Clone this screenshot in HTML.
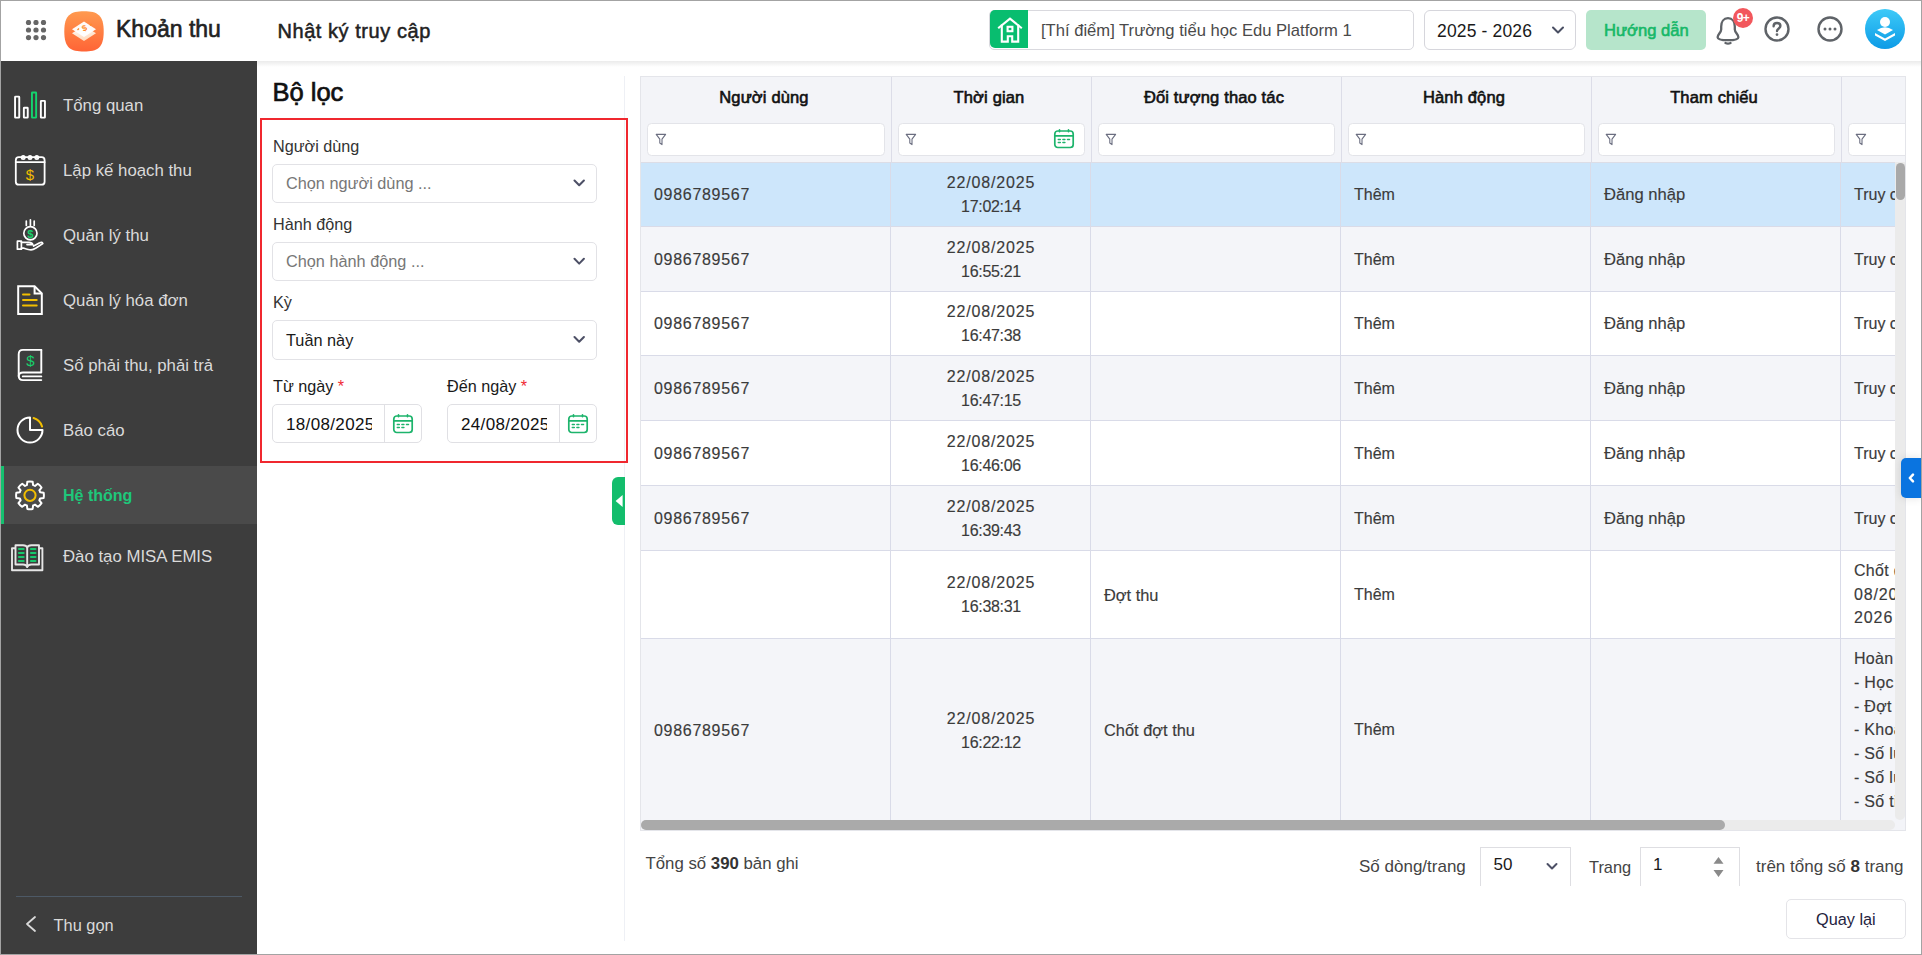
<!DOCTYPE html>
<html><head><meta charset="utf-8">
<style>
*{box-sizing:border-box;margin:0;padding:0}
html,body{width:1922px;height:955px;overflow:hidden;background:#fff}
body{font-family:"Liberation Sans",sans-serif;position:relative;color:#333}
.a{position:absolute}
#frame{position:absolute;left:0;top:0;width:1922px;height:955px;border:1px solid #a3a3a3;z-index:50;pointer-events:none}
/* header */
#hdr{left:1px;top:1px;width:1920px;height:60px;background:#fff}
#hdrsh{left:257px;top:61px;width:1664px;height:6px;background:linear-gradient(#ebebeb,rgba(255,255,255,0))}
/* sidebar */
#side{left:1px;top:61px;width:256px;height:893px;background:#3d3d3d}
.mi{position:absolute;left:0;width:256px;height:58px}
.mi .t{position:absolute;left:62px;top:0;line-height:58px;font-size:16px;color:#dcdcdc;white-space:nowrap}
.mi svg{position:absolute;left:11px;top:11px}
.mi.act{background:#4a4a4a}
.mi.act:before{content:"";position:absolute;left:0;top:0;width:3px;height:58px;background:#1bc37a}
.mi.act .t{color:#1fc77c;font-weight:700}
/* filter */
.lbl{position:absolute;font-size:16px;color:#333;white-space:nowrap}
.sel{position:absolute;border:1px solid #dcdde3;border-radius:5px;background:#fff}
.sel .tx{position:absolute;left:13px;top:0;font-size:16px;white-space:nowrap}
.chev{position:absolute}
/* table */
.th{position:absolute;font-weight:700;font-size:16px;color:#111;white-space:nowrap;text-align:center}
.cell{position:absolute;font-size:16px;color:#3b3b3b;white-space:nowrap;-webkit-text-stroke:0.15px #3b3b3b}
</style></head><body>
<div id="frame"></div>
<div id="hdr" class="a"></div>
<div id="hdrsh" class="a"></div>
<div id="side" class="a"></div>

<!-- sidebar -->
<div class="a" style="left:1px;top:466px;width:256px;height:58px;background:#4a4a4a"></div>
<div class="a" style="left:1px;top:466px;width:3px;height:58px;background:#15c06f"></div>
<div class="a" style="left:63px;top:1px;width:190px;height:955px;font-size:16.8px;line-height:20px;color:#dadada;white-space:nowrap">
 <div class="a" style="top:95px">Tổng quan</div>
 <div class="a" style="top:160px">Lập kế hoạch thu</div>
 <div class="a" style="top:225px">Quản lý thu</div>
 <div class="a" style="top:290px">Quản lý hóa đơn</div>
 <div class="a" style="top:355px">Sổ phải thu, phải trả</div>
 <div class="a" style="top:420px">Báo cáo</div>
 <div class="a" style="top:485px;font-size:16px;font-weight:700;color:#1ec77a">Hệ thống</div>
 <div class="a" style="top:546px">Đào tạo MISA EMIS</div>
 <div class="a" style="top:914px;left:-9.5px;font-size:16.4px">Thu gọn</div>
</div>
<div class="a" style="left:16px;top:896px;width:226px;height:1px;background:#4d5966"></div>
<svg class="a" style="left:0;top:0" width="257" height="955" viewBox="0 0 257 955" fill="none" stroke-linecap="round" stroke-linejoin="round">
 <!-- tong quan -->
 <g stroke="#fff" stroke-width="1.9">
  <rect x="15.05" y="96.65" width="4.2" height="21" rx="0.5"/>
  <rect x="23.85" y="107.75" width="3.9" height="9.9" rx="0.5"/>
  <rect x="40.85" y="100.85" width="4.1" height="16.8" rx="0.5"/>
 </g>
 <rect x="31.95" y="92.45" width="4.2" height="25.2" rx="0.5" stroke="#13d46e" stroke-width="1.9"/>
 <!-- calendar -->
 <g stroke="#fff" stroke-width="1.8">
  <path d="M18.8 157.2H41.6Q44.6 157.2 44.6 160.2V181.7Q44.6 184.7 41.6 184.7H18.8Q15.8 184.7 15.8 181.7V160.2Q15.8 157.2 18.8 157.2Z"/>
  <path d="M15.8 162.2H44.6"/>
  <circle cx="23.2" cy="157.6" r="1.6"/><circle cx="30" cy="157.6" r="1.6"/><circle cx="36.8" cy="157.6" r="1.6"/>
 </g>
 <text x="30" y="179.5" font-family="Liberation Sans" font-size="15" fill="#f2be00" stroke="none" text-anchor="middle">$</text>
 <!-- hand coin -->
 <g stroke="#fff" stroke-width="1.7">
  <circle cx="30.4" cy="233.3" r="6.6"/>
  <path d="M26.3 221V225.5M30.4 219.8V225.5M34.2 221V225.5"/>
  <rect x="17.4" y="241.2" width="4" height="8"/>
  <path d="M21.4 242.3H29Q32 242.3 32.8 244.6H27M21.4 248.2H24Q29 249.8 31 249.8Q33 249.8 36 248L42.8 243.6Q42 241.6 39.8 242.8L33.6 246"/>
 </g>
 <text x="30.4" y="238" font-family="Liberation Sans" font-weight="700" font-size="11" fill="#18d06c" stroke="none" text-anchor="middle">$</text>
 <!-- doc -->
 <g stroke="#fff" stroke-width="2" stroke-linecap="butt" stroke-linejoin="miter">
  <path d="M18.2 286.2H34.6L41.8 293.4V314H18.2Z"/>
  <path d="M34.6 286.2V293.4H41.8"/>
 </g>
 <g stroke="#f2be00" stroke-width="2">
  <path d="M23 294.5H29.5M23 300H36.7M23 305.5H36.7"/>
 </g>
 <!-- ledger book -->
 <g stroke="#fff" stroke-width="1.9">
  <path d="M41.3 349.9H23Q18.7 349.9 18.7 354.2V375.8Q18.7 380.1 23 380.1H41.3"/>
  <path d="M41.3 349.9V372.5H23Q18.7 372.5 18.7 376.2"/>
  <path d="M22.8 376.4H41.3"/>
 </g>
 <text x="30.3" y="366" font-family="Liberation Sans" font-size="15" fill="#18d06c" stroke="none" text-anchor="middle">$</text>
 <!-- pie -->
 <g stroke="#fff" stroke-width="2">
  <path d="M30 417.5V430H42.5A12.5 12.5 0 1 1 30 417.5Z"/>
 </g>
 <path d="M33.6 418A12.6 12.6 0 0 1 42.1 426.6" stroke="#f2be00" stroke-width="2"/>
 <!-- gear -->
 <path stroke="#fff" stroke-width="2" d="M26.90 485.16L27.35 481.66A13.9 13.9 0 0 1 32.65 481.66L33.10 485.16A10.6 10.6 0 0 1 34.98 485.94L37.77 483.78A13.9 13.9 0 0 1 41.52 487.53L39.36 490.32A10.6 10.6 0 0 1 40.14 492.20L43.64 492.65A13.9 13.9 0 0 1 43.64 497.95L40.14 498.40A10.6 10.6 0 0 1 39.36 500.28L41.52 503.07A13.9 13.9 0 0 1 37.77 506.82L34.98 504.66A10.6 10.6 0 0 1 33.10 505.44L32.65 508.94A13.9 13.9 0 0 1 27.35 508.94L26.90 505.44A10.6 10.6 0 0 1 25.02 504.66L22.23 506.82A13.9 13.9 0 0 1 18.48 503.07L20.64 500.28A10.6 10.6 0 0 1 19.86 498.40L16.36 497.95A13.9 13.9 0 0 1 16.36 492.65L19.86 492.20A10.6 10.6 0 0 1 20.64 490.32L18.48 487.53A13.9 13.9 0 0 1 22.23 483.78L25.02 485.94A10.6 10.6 0 0 1 26.90 485.16Z"/>
 <circle cx="30" cy="495.3" r="5.6" stroke="#f2be00" stroke-width="2"/>
 <!-- open book -->
 <g stroke="#e6e6e6" stroke-width="1.9">
  <path d="M15 548.2H12V570.2H42.4V548.2H39.5"/>
  <path d="M15.5 545.2H23Q26.5 545.2 27.2 547.5Q27.9 545.2 31.4 545.2H39V564.5H31.4Q28.2 564.5 27.2 567 26.2 564.5 23 564.5H15.5Z"/>
  <path d="M27.2 547.5V567"/>
 </g>
 <g stroke="#17c86c" stroke-width="2.2">
  <path d="M19 549H23.6M19 553H23.6M19 557H23.6M19 561H23.6M31 549H35.4M31 553H35.4M31 557H35.4M31 561H35.4"/>
 </g>
 <!-- thu gon chevron -->
 <path d="M35 917L27 924 35 931" stroke="#dadada" stroke-width="1.8"/>
</svg>


<!-- filter panel -->
<div class="a" style="left:624px;top:76px;width:1px;height:865px;background:#eef0f5"></div>
<div class="a" style="left:272.5px;top:76.5px;font-size:25.5px;line-height:30px;-webkit-text-stroke:0.7px #111;color:#111;white-space:nowrap">Bộ lọc</div>
<div class="a" style="left:260px;top:118px;width:368px;height:345px;border:2px solid #f0282f"></div>
<div class="a" style="left:273px;top:136px;font-size:16.2px;line-height:20px;color:#333;white-space:nowrap">Người dùng</div>
<div class="a" style="left:272px;top:164px;width:325px;height:39px;border:1px solid #e2e2e6;border-radius:5px"></div>
<div class="a" style="left:286px;top:172px;font-size:16.3px;line-height:22px;color:#777;white-space:nowrap">Chọn người dùng ...</div>
<div class="a" style="left:273px;top:214px;font-size:16.2px;line-height:20px;color:#333;white-space:nowrap">Hành động</div>
<div class="a" style="left:272px;top:242px;width:325px;height:39px;border:1px solid #e2e2e6;border-radius:5px"></div>
<div class="a" style="left:286px;top:250px;font-size:16.3px;line-height:22px;color:#777;white-space:nowrap">Chọn hành động ...</div>
<div class="a" style="left:273px;top:292px;font-size:16.2px;line-height:20px;color:#333;white-space:nowrap">Kỳ</div>
<div class="a" style="left:272px;top:320px;width:325px;height:40px;border:1px solid #e2e2e6;border-radius:5px"></div>
<div class="a" style="left:286px;top:329px;font-size:16.3px;line-height:22px;color:#1a1a1a;white-space:nowrap">Tuần này</div>
<svg class="a" style="left:0;top:0" width="640" height="470" viewBox="0 0 640 470" fill="none" stroke-linecap="round" stroke-linejoin="round">
 <path d="M574.5 180.5L579.2 185.3 583.9 180.5M574.5 258.8L579.2 263.6 583.9 258.8M574.5 337L579.2 341.8 583.9 337" stroke="#4d5066" stroke-width="2"/>
</svg>
<div class="a" style="left:273px;top:376px;font-size:16.2px;line-height:20px;color:#1a1a1a;white-space:nowrap">Từ ngày <span style="color:#f02a33">*</span></div>
<div class="a" style="left:447px;top:376px;font-size:16.2px;line-height:20px;color:#1a1a1a;white-space:nowrap">Đến ngày <span style="color:#f02a33">*</span></div>
<div class="a" style="left:272px;top:404px;width:150px;height:39px;border:1px solid #e0e0e4;border-radius:5px"></div>
<div class="a" style="left:384px;top:405px;width:1px;height:37px;background:#e0e0e4"></div>
<div class="a" style="left:447px;top:404px;width:150px;height:39px;border:1px solid #e0e0e4;border-radius:5px"></div>
<div class="a" style="left:559px;top:405px;width:1px;height:37px;background:#e0e0e4"></div>
<div class="a" style="left:286px;top:414px;width:85.5px;overflow:hidden;font-size:17px;line-height:22px;letter-spacing:0.35px;color:#111;white-space:nowrap">18/08/2025</div>
<div class="a" style="left:461px;top:414px;width:85.5px;overflow:hidden;font-size:17px;line-height:22px;letter-spacing:0.35px;color:#111;white-space:nowrap">24/08/2025</div>
<svg class="a" style="left:392px;top:414px" width="22" height="20" viewBox="0 0 22 20" fill="none" stroke="#1db46c" stroke-width="1.7" stroke-linecap="round">
 <rect x="1.8" y="2" width="18.4" height="16.5" rx="3"/><path d="M1.8 6.8H20.2M6.5 0.9V2.6M15.5 0.9V2.6"/>
 <path d="M5.3 10.4H7.3M9.9 10.4H11.9M14.5 10.4H16.5M5.3 13.6H7.3M9.9 13.6H11.9" stroke-width="1.5"/></svg>
<svg class="a" style="left:567px;top:414px" width="22" height="20" viewBox="0 0 22 20" fill="none" stroke="#1db46c" stroke-width="1.7" stroke-linecap="round">
 <rect x="1.8" y="2" width="18.4" height="16.5" rx="3"/><path d="M1.8 6.8H20.2M6.5 0.9V2.6M15.5 0.9V2.6"/>
 <path d="M5.3 10.4H7.3M9.9 10.4H11.9M14.5 10.4H16.5M5.3 13.6H7.3M9.9 13.6H11.9" stroke-width="1.5"/></svg>
<div class="a" style="left:612px;top:477px;width:13px;height:48px;background:#13bd6c;border-radius:6px 0 0 6px"></div>
<svg class="a" style="left:612px;top:477px" width="13" height="48" viewBox="0 0 13 48"><path d="M3.6 24L10.6 18V30Z" fill="#fff"/></svg>

<!-- TABLE START -->
<!-- table -->
<div class="a" style="left:640px;top:76px;width:1266px;height:755px;border:1px solid #e4e5ea;background:#f3f4f8"></div>
<div class="a" style="left:641px;top:77px;width:1264px;height:85px;background:#f3f4f8"></div>
<div class="a" style="left:641px;top:162.0px;width:1254px;height:64.4px;background:#cde6fb"></div>
<div class="a" style="left:641px;top:226.4px;width:1254px;height:64.8px;background:#f4f5f9"></div>
<div class="a" style="left:641px;top:291.2px;width:1254px;height:64.4px;background:#ffffff"></div>
<div class="a" style="left:641px;top:355.6px;width:1254px;height:64.8px;background:#f4f5f9"></div>
<div class="a" style="left:641px;top:420.4px;width:1254px;height:64.7px;background:#ffffff"></div>
<div class="a" style="left:641px;top:485.1px;width:1254px;height:65.4px;background:#f4f5f9"></div>
<div class="a" style="left:641px;top:550.5px;width:1254px;height:87.8px;background:#ffffff"></div>
<div class="a" style="left:641px;top:638.3px;width:1254px;height:181.7px;background:#f4f5f9"></div>
<div class="a" style="left:641px;top:161.5px;width:1254px;height:1px;background:#dcdde6"></div>
<div class="a" style="left:641px;top:225.9px;width:1254px;height:1px;background:#d9dbe8"></div>
<div class="a" style="left:641px;top:290.7px;width:1254px;height:1px;background:#d9dbe8"></div>
<div class="a" style="left:641px;top:355.1px;width:1254px;height:1px;background:#d9dbe8"></div>
<div class="a" style="left:641px;top:419.9px;width:1254px;height:1px;background:#d9dbe8"></div>
<div class="a" style="left:641px;top:484.6px;width:1254px;height:1px;background:#d9dbe8"></div>
<div class="a" style="left:641px;top:550.0px;width:1254px;height:1px;background:#d9dbe8"></div>
<div class="a" style="left:641px;top:637.8px;width:1254px;height:1px;background:#d9dbe8"></div>
<div class="a" style="left:891px;top:77px;width:1px;height:85px;background:#dcdde8"></div>
<div class="a" style="left:890px;top:162px;width:1px;height:658px;background:#d9dbe8"></div>
<div class="a" style="left:1091px;top:77px;width:1px;height:85px;background:#dcdde8"></div>
<div class="a" style="left:1090px;top:162px;width:1px;height:658px;background:#d9dbe8"></div>
<div class="a" style="left:1341px;top:77px;width:1px;height:85px;background:#dcdde8"></div>
<div class="a" style="left:1340px;top:162px;width:1px;height:658px;background:#d9dbe8"></div>
<div class="a" style="left:1591px;top:77px;width:1px;height:85px;background:#dcdde8"></div>
<div class="a" style="left:1590px;top:162px;width:1px;height:658px;background:#d9dbe8"></div>
<div class="a" style="left:1841px;top:77px;width:1px;height:85px;background:#dcdde8"></div>
<div class="a" style="left:1840px;top:162px;width:1px;height:658px;background:#d9dbe8"></div>
<div class="th" style="left:664.0px;top:86.7px;width:200px;font-size:16.5px;line-height:20px;font-weight:400;-webkit-text-stroke:0.6px #111;letter-spacing:0.15px">Người dùng</div>
<div class="th" style="left:889.0px;top:86.7px;width:200px;font-size:16.5px;line-height:20px;font-weight:400;-webkit-text-stroke:0.6px #111;letter-spacing:0.15px">Thời gian</div>
<div class="th" style="left:1114.0px;top:86.7px;width:200px;font-size:16.5px;line-height:20px;font-weight:400;-webkit-text-stroke:0.6px #111;letter-spacing:0.15px">Đối tượng thao tác</div>
<div class="th" style="left:1364.0px;top:86.7px;width:200px;font-size:16.5px;line-height:20px;font-weight:400;-webkit-text-stroke:0.6px #111;letter-spacing:0.15px">Hành động</div>
<div class="th" style="left:1614.0px;top:86.7px;width:200px;font-size:16.5px;line-height:20px;font-weight:400;-webkit-text-stroke:0.6px #111;letter-spacing:0.15px">Tham chiếu</div>
<div class="a" style="left:0;top:0;width:1905px;height:170px;overflow:hidden">
<div class="a" style="left:647px;top:123px;width:238px;height:33px;border:1px solid #e3e4e9;border-radius:4.5px;background:#fff"></div>
<svg class="a" style="left:654.5px;top:133px" width="12" height="13" viewBox="0 0 12 13" fill="none" stroke="#6b6e80" stroke-width="1.1" stroke-linejoin="round"><path d="M1.2 1.4H10.6L7 6.2V11.6L4.8 10V6.2Z"/></svg>
<div class="a" style="left:897.5px;top:123px;width:187.5px;height:33px;border:1px solid #e3e4e9;border-radius:4.5px;background:#fff"></div>
<svg class="a" style="left:905.0px;top:133px" width="12" height="13" viewBox="0 0 12 13" fill="none" stroke="#6b6e80" stroke-width="1.1" stroke-linejoin="round"><path d="M1.2 1.4H10.6L7 6.2V11.6L4.8 10V6.2Z"/></svg>
<div class="a" style="left:1097.5px;top:123px;width:237.5px;height:33px;border:1px solid #e3e4e9;border-radius:4.5px;background:#fff"></div>
<svg class="a" style="left:1105.0px;top:133px" width="12" height="13" viewBox="0 0 12 13" fill="none" stroke="#6b6e80" stroke-width="1.1" stroke-linejoin="round"><path d="M1.2 1.4H10.6L7 6.2V11.6L4.8 10V6.2Z"/></svg>
<div class="a" style="left:1347.5px;top:123px;width:237.5px;height:33px;border:1px solid #e3e4e9;border-radius:4.5px;background:#fff"></div>
<svg class="a" style="left:1355.0px;top:133px" width="12" height="13" viewBox="0 0 12 13" fill="none" stroke="#6b6e80" stroke-width="1.1" stroke-linejoin="round"><path d="M1.2 1.4H10.6L7 6.2V11.6L4.8 10V6.2Z"/></svg>
<div class="a" style="left:1597.5px;top:123px;width:237.5px;height:33px;border:1px solid #e3e4e9;border-radius:4.5px;background:#fff"></div>
<svg class="a" style="left:1605.0px;top:133px" width="12" height="13" viewBox="0 0 12 13" fill="none" stroke="#6b6e80" stroke-width="1.1" stroke-linejoin="round"><path d="M1.2 1.4H10.6L7 6.2V11.6L4.8 10V6.2Z"/></svg>
<div class="a" style="left:1847.5px;top:123px;width:237.5px;height:33px;border:1px solid #e3e4e9;border-radius:4.5px;background:#fff"></div>
<svg class="a" style="left:1855.0px;top:133px" width="12" height="13" viewBox="0 0 12 13" fill="none" stroke="#6b6e80" stroke-width="1.1" stroke-linejoin="round"><path d="M1.2 1.4H10.6L7 6.2V11.6L4.8 10V6.2Z"/></svg>
</div>
<svg class="a" style="left:1053px;top:129px" width="22" height="20" viewBox="0 0 22 20" fill="none" stroke="#1db46c" stroke-width="1.7" stroke-linecap="round"><rect x="1.8" y="2" width="18.4" height="16.5" rx="3"/><path d="M1.8 6.8H20.2M6.5 0.9V2.6M15.5 0.9V2.6"/><path d="M5.3 10.4H7.3M9.9 10.4H11.9M14.5 10.4H16.5M5.3 13.6H7.3M9.9 13.6H11.9" stroke-width="1.5"/></svg>
<div class="a" style="left:641px;top:162px;width:1254px;height:658px;overflow:hidden">
<div class="cell" style="left:13px;top:21.1px;line-height:24px;letter-spacing:0.7px">0986789567</div>
<div class="cell" style="left:251px;top:9.1px;width:198px;text-align:center;line-height:24px"><span style="letter-spacing:0.85px">22/08/2025</span><br><span style="letter-spacing:-0.3px">17:02:14</span></div>
<div class="cell" style="left:713px;top:21.1px;line-height:24px;">Thêm</div>
<div class="cell" style="left:963px;top:21.1px;line-height:24px;font-size:16.6px">Đăng nhập</div>
<div class="cell" style="left:1213px;top:21.1px;line-height:24px;">Truy cập vào hệ thống</div>
<div class="cell" style="left:13px;top:85.8px;line-height:24px;letter-spacing:0.7px">0986789567</div>
<div class="cell" style="left:251px;top:73.8px;width:198px;text-align:center;line-height:24px"><span style="letter-spacing:0.85px">22/08/2025</span><br><span style="letter-spacing:-0.3px">16:55:21</span></div>
<div class="cell" style="left:713px;top:85.8px;line-height:24px;">Thêm</div>
<div class="cell" style="left:963px;top:85.8px;line-height:24px;font-size:16.6px">Đăng nhập</div>
<div class="cell" style="left:1213px;top:85.8px;line-height:24px;">Truy cập vào hệ thống</div>
<div class="cell" style="left:13px;top:150.3px;line-height:24px;letter-spacing:0.7px">0986789567</div>
<div class="cell" style="left:251px;top:138.3px;width:198px;text-align:center;line-height:24px"><span style="letter-spacing:0.85px">22/08/2025</span><br><span style="letter-spacing:-0.3px">16:47:38</span></div>
<div class="cell" style="left:713px;top:150.3px;line-height:24px;">Thêm</div>
<div class="cell" style="left:963px;top:150.3px;line-height:24px;font-size:16.6px">Đăng nhập</div>
<div class="cell" style="left:1213px;top:150.3px;line-height:24px;">Truy cập vào hệ thống</div>
<div class="cell" style="left:13px;top:214.9px;line-height:24px;letter-spacing:0.7px">0986789567</div>
<div class="cell" style="left:251px;top:202.9px;width:198px;text-align:center;line-height:24px"><span style="letter-spacing:0.85px">22/08/2025</span><br><span style="letter-spacing:-0.3px">16:47:15</span></div>
<div class="cell" style="left:713px;top:214.9px;line-height:24px;">Thêm</div>
<div class="cell" style="left:963px;top:214.9px;line-height:24px;font-size:16.6px">Đăng nhập</div>
<div class="cell" style="left:1213px;top:214.9px;line-height:24px;">Truy cập vào hệ thống</div>
<div class="cell" style="left:13px;top:279.7px;line-height:24px;letter-spacing:0.7px">0986789567</div>
<div class="cell" style="left:251px;top:267.7px;width:198px;text-align:center;line-height:24px"><span style="letter-spacing:0.85px">22/08/2025</span><br><span style="letter-spacing:-0.3px">16:46:06</span></div>
<div class="cell" style="left:713px;top:279.7px;line-height:24px;">Thêm</div>
<div class="cell" style="left:963px;top:279.7px;line-height:24px;font-size:16.6px">Đăng nhập</div>
<div class="cell" style="left:1213px;top:279.7px;line-height:24px;">Truy cập vào hệ thống</div>
<div class="cell" style="left:13px;top:344.7px;line-height:24px;letter-spacing:0.7px">0986789567</div>
<div class="cell" style="left:251px;top:332.7px;width:198px;text-align:center;line-height:24px"><span style="letter-spacing:0.85px">22/08/2025</span><br><span style="letter-spacing:-0.3px">16:39:43</span></div>
<div class="cell" style="left:713px;top:344.7px;line-height:24px;">Thêm</div>
<div class="cell" style="left:963px;top:344.7px;line-height:24px;font-size:16.6px">Đăng nhập</div>
<div class="cell" style="left:1213px;top:344.7px;line-height:24px;">Truy cập vào hệ thống</div>
<div class="cell" style="left:251px;top:409.4px;width:198px;text-align:center;line-height:24px"><span style="letter-spacing:0.85px">22/08/2025</span><br><span style="letter-spacing:-0.3px">16:38:31</span></div>
<div class="cell" style="left:463px;top:420.6px;line-height:24px;font-size:16.4px">Đợt thu</div>
<div class="cell" style="left:713px;top:420.6px;line-height:24px;">Thêm</div>
<div class="cell" style="left:1213px;top:396.8px;line-height:23.8px;white-space:normal;width:400px"><span style="letter-spacing:0.3px">Chốt đợt thu tháng</span><br><span style="letter-spacing:0.85px">08/2025 năm học 2025 -</span><br><span style="letter-spacing:0.9px">2026</span></div>
<div class="cell" style="left:13px;top:556.8px;line-height:24px;letter-spacing:0.7px">0986789567</div>
<div class="cell" style="left:251px;top:544.7px;width:198px;text-align:center;line-height:24px"><span style="letter-spacing:0.85px">22/08/2025</span><br><span style="letter-spacing:-0.3px">16:22:12</span></div>
<div class="cell" style="left:463px;top:556.2px;line-height:24px;font-size:16.4px">Chốt đợt thu</div>
<div class="cell" style="left:713px;top:556.2px;line-height:24px;">Thêm</div>
<div class="cell" style="left:1213px;top:485.2px;line-height:23.75px;white-space:normal;width:400px"><span style="letter-spacing:0.3px">Hoàn thành chốt<br>- Học sinh<br>- Đợt thu<br>- Khoản thu<br>- Số lượng<br>- Số lượng<br>- Số tiền</span></div>
</div>
<div class="a" style="left:1895px;top:162px;width:10px;height:658px;background:#ebebeb;border-radius:0 0 5px 5px"></div>
<div class="a" style="left:1896px;top:163px;width:9px;height:37px;background:#a9a9a9;border-radius:5px"></div>
<div class="a" style="left:641px;top:820px;width:1254px;height:10px;background:#ebebeb;border-radius:5px"></div>
<div class="a" style="left:641px;top:820px;width:1084px;height:10px;background:#aaaaaa;border-radius:5px"></div>
<div class="a" style="left:1901px;top:458px;width:20px;height:40px;background:#0a74e0;border-radius:5px 0 0 5px;box-shadow:0 0 10px rgba(0,0,0,0.12)"></div>
<svg class="a" style="left:1901px;top:458px" width="20" height="40" viewBox="0 0 20 40"><path d="M12 16.6L8.8 20 12 23.4" fill="none" stroke="#fff" stroke-width="2.5" stroke-linecap="round" stroke-linejoin="round"/></svg>
<!-- TABLE END -->

<!-- footer -->
<div class="a" style="left:645.5px;top:853px;font-size:16.8px;line-height:22px;color:#444;white-space:nowrap">Tổng số <b style="color:#333">390</b> bản ghi</div>
<div class="a" style="left:1359px;top:856px;font-size:17px;line-height:22px;color:#444;white-space:nowrap">Số dòng/trang</div>
<div class="a" style="left:1480px;top:847px;width:91px;height:39px;border:1px solid #dedee2;border-bottom:none"></div>
<div class="a" style="left:1493.5px;top:854px;font-size:17px;line-height:22px;color:#1a1a1a;white-space:nowrap">50</div>
<svg class="a" style="left:1545px;top:861px" width="14" height="10" viewBox="0 0 14 10"><path d="M2.5 3L7 7.5 11.5 3" fill="none" stroke="#4d5066" stroke-width="2" stroke-linecap="round" stroke-linejoin="round"/></svg>
<div class="a" style="left:1589px;top:856px;font-size:16.4px;line-height:22px;color:#444;white-space:nowrap">Trang</div>
<div class="a" style="left:1640px;top:847px;width:100px;height:39px;border:1px solid #dedee2;border-bottom:none"></div>
<div class="a" style="left:1653px;top:854px;font-size:17px;line-height:22px;color:#1a1a1a;white-space:nowrap">1</div>
<svg class="a" style="left:1711px;top:855px" width="15" height="24" viewBox="0 0 15 24"><path d="M7.5 2L12.5 8.8H2.5Z M2.5 15H12.5L7.5 22Z" fill="#8a8a8a"/></svg>
<div class="a" style="left:1756px;top:856px;font-size:17px;line-height:22px;color:#444;white-space:nowrap">trên tổng số <b style="color:#333">8</b> trang</div>
<div class="a" style="left:1786px;top:899px;width:120px;height:40px;border:1px solid #e4e4e8;border-radius:5px;background:#fff"></div>
<div class="a" style="left:1816px;top:907.8px;font-size:16.3px;line-height:22px;color:#1f2340;white-space:nowrap">Quay lại</div>

<!-- header content -->
<svg class="a" style="left:24px;top:20px" width="24" height="22" viewBox="0 0 24 22">
<g fill="#666"><circle cx="4.5" cy="2.5" r="2.6"/><circle cx="12" cy="2.5" r="2.6"/><circle cx="19.5" cy="2.5" r="2.6"/>
<circle cx="4.5" cy="10" r="2.6"/><circle cx="12" cy="10" r="2.6"/><circle cx="19.5" cy="10" r="2.6"/>
<circle cx="4.5" cy="17.6" r="2.6"/><circle cx="12" cy="17.6" r="2.6"/><circle cx="19.5" cy="17.6" r="2.6"/></g></svg>
<svg class="a" style="left:64px;top:10.5px" width="40" height="41" viewBox="0 0 40 41">
<defs><linearGradient id="lg1" x1="0" y1="0" x2="0" y2="1"><stop offset="0" stop-color="#ff9a4f"/><stop offset="1" stop-color="#ff6436"/></linearGradient>
<linearGradient id="lg2" x1="0" y1="0" x2="0.3" y2="1"><stop offset="0" stop-color="#fff"/><stop offset="1" stop-color="#ffdcc0"/></linearGradient></defs>
<path d="M20 0.3C33.5 0.3 39.7 4 39.7 20.5S33.5 40.5 20 40.5 0.3 37 0.3 20.5 6.5 0.3 20 0.3Z" fill="url(#lg1)"/>
<path d="M8 22.3L20 14.8 32 22.3 20 30Z" fill="url(#lg2)"/>
<path d="M8 18.2L20 10.5 32 18.2 20 26Z" fill="#fff" opacity="0.96"/>
<text x="20.5" y="20" font-family="Liberation Sans" font-weight="700" font-size="8.5" fill="#ff8a2a" text-anchor="middle" transform="rotate(-25 20.5 17)">$</text>
<path d="M15 17.5L13.5 19M26 14.5L27.5 13" stroke="#ff8a2a" stroke-width="1.3"/>
</svg>
<div class="a" style="left:116px;top:14px;font-size:23px;line-height:30px;color:#222;white-space:nowrap;-webkit-text-stroke:0.6px #222">Khoản thu</div>
<div class="a" style="left:277.5px;top:16.5px;font-size:20px;line-height:28px;letter-spacing:0.55px;-webkit-text-stroke:0.5px #222;color:#222;white-space:nowrap">Nhật ký truy cập</div>
<div class="a" style="left:989px;top:10px;width:425px;height:40px;border:1px solid #d9d9de;border-radius:5px;overflow:hidden;background:#fff">
<div class="a" style="left:51px;top:9px;font-size:16.6px;line-height:22px;color:#4a4a4a;white-space:nowrap">[Thí điểm] Trường tiểu học Edu Platform 1</div>
</div>
<div class="a" style="left:989.5px;top:10px;width:38.5px;height:38px;background:#08bd6f;border-radius:5px 0 0 5px"></div>
<svg class="a" style="left:989px;top:10px" width="40" height="40" viewBox="989 10 40 40" fill="none" stroke="#fff" stroke-width="2.1" stroke-linejoin="miter" stroke-linecap="square">
 <path d="M999 27.6L1010 18.6 1021 27.6"/><path d="M1001.8 25.6V41.6H1007.8V36.2H1012.2V41.6H1018.2V25.6"/><rect x="1007.6" y="26.8" width="4.8" height="4.4"/></svg>
<div class="a" style="left:1424px;top:10px;width:152px;height:40px;border:1px solid #d6d6dc;border-radius:6px;background:#fff">
 <div class="a" style="left:12px;top:8.5px;font-size:17.5px;letter-spacing:0.15px;line-height:22px;color:#1a1a1a;white-space:nowrap">2025 - 2026</div>
 <svg class="a" style="left:126px;top:14px" width="14" height="10" viewBox="0 0 14 10"><path d="M2 2.5L7 7.5 12 2.5" fill="none" stroke="#4a4f63" stroke-width="2" stroke-linecap="round" stroke-linejoin="round"/></svg>
</div>
<div class="a" style="left:1586px;top:10px;width:120px;height:40px;border-radius:5px;background:#b6e5cb">
 <div class="a" style="left:18px;top:9.5px;font-size:16.6px;line-height:22px;-webkit-text-stroke:0.6px #17b868;color:#17b868;white-space:nowrap">Hướng dẫn</div>
</div>
<svg class="a" style="left:1714px;top:14px" width="30" height="32" viewBox="0 0 30 32" fill="none" stroke="#5f6368" stroke-width="2.3" stroke-linecap="round" stroke-linejoin="round">
 <path d="M14 4.2C9.6 4.2 7.2 7.8 7.2 12.5V15.5C7.2 18.5 3.6 20.5 3.6 23.2C3.6 25.3 8 26.2 14 26.2S24.4 25.3 24.4 23.2C24.4 20.5 20.8 18.5 20.8 15.5V12.5C20.8 7.8 18.4 4.2 14 4.2Z"/><path d="M11.5 29Q14 30.3 16.5 29"/></svg>
<div class="a" style="left:1733px;top:8px;width:20px;height:20px;border-radius:10px;background:#f2575c;color:#fff;font-size:12px;font-weight:700;line-height:20px;text-align:center;letter-spacing:-0.6px">9+</div>
<svg class="a" style="left:1763px;top:15px" width="28" height="28" viewBox="0 0 28 28" fill="none" stroke="#5f6368" stroke-width="2.4" stroke-linecap="round">
 <circle cx="14" cy="14" r="11.5"/><path d="M10.6 11.2C10.6 9.2 12.2 8 14 8S17.4 9.2 17.4 11.1C17.4 13.3 14 13.6 14 16"/><circle cx="14" cy="19.6" r="0.6" fill="#666" stroke-width="1.6"/></svg>
<svg class="a" style="left:1816px;top:15px" width="28" height="28" viewBox="0 0 28 28" fill="none" stroke="#5f6368" stroke-width="2.4">
 <circle cx="14" cy="14" r="11.5"/><g fill="#5f6368" stroke="none"><circle cx="9" cy="14" r="1.5"/><circle cx="14" cy="14" r="1.5"/><circle cx="19" cy="14" r="1.5"/></g></svg>
<svg class="a" style="left:1865px;top:9px" width="40" height="40" viewBox="0 0 40 40">
 <defs><linearGradient id="lg3" x1="0" y1="0" x2="0" y2="1"><stop offset="0" stop-color="#3dcaf8"/><stop offset="1" stop-color="#0d9be6"/></linearGradient></defs>
 <circle cx="20" cy="20" r="20" fill="url(#lg3)"/>
 <circle cx="20" cy="13" r="5" fill="#fff"/>
 <path d="M12 21Q20 15.5 28 21L20 25.5Z" fill="#fff"/>
 <path d="M10 24L20 29.5 30 24 30 26.5 20 32 10 26.5Z" fill="#fff"/>
</svg>

</body></html>
